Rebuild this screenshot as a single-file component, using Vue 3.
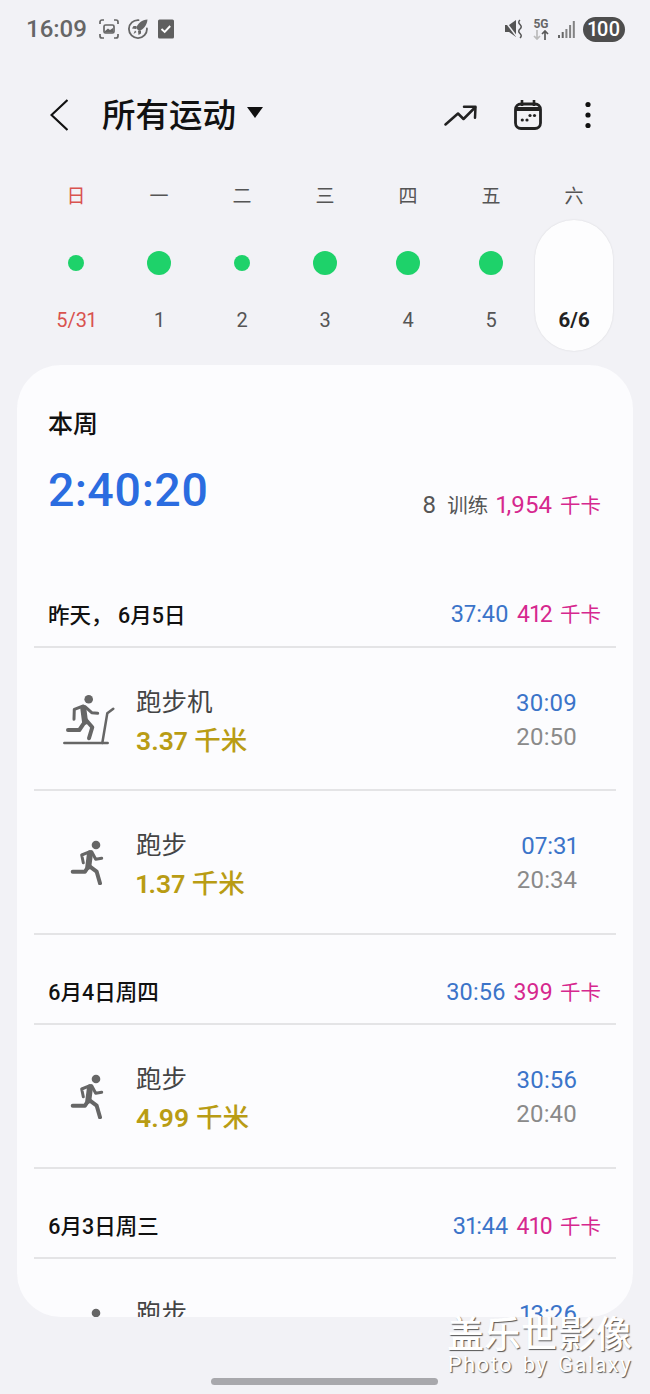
<template>
  <div class="page">
    <div class="status">
      <div class="status-left">
        <span class="time">16:09</span>
        <svg class="st" width="20" height="20" viewBox="0 0 20 20" fill="none" stroke="#666" stroke-width="1.7">
          <path d="M1 5V3a2 2 0 0 1 2-2h2M15 1h2a2 2 0 0 1 2 2v2M19 15v2a2 2 0 0 1-2 2h-2M5 19H3a2 2 0 0 1-2-2v-2" />
          <rect x="5" y="6" width="10" height="8" rx="1.5" />
          <path d="M6 12l3-2.5 2 1.500 3-2V13.500H6z" fill="#666" stroke="none" />
        </svg>
        <svg class="st" width="20" height="20" viewBox="0 0 20 20" fill="none">
          <path d="M10.500 1.100A9 9 0 1 0 18.900 9.500" stroke="#666" stroke-width="1.800" stroke-linecap="round" />
          <path d="M19.500 .5C14 1 10 4 8 9l3 3c5-2 8-6 8.500-11.500z" fill="#666" />
          <path d="M8.500 7H5.500l-1.500 2.500 4 .5zM13 11.500V14.500l-2.500 1.500-.5-4zM7 11.500l1.500 1.500-3 2z" fill="#666" />
        </svg>
        <svg class="st check" width="16" height="20" viewBox="0 0 16 20">
          <rect width="16" height="19" y="0.500" rx="1.500" fill="#5f5f5f" />
          <path d="M3.500 10l3.200 3 5.500-6" fill="none" stroke="#fff" stroke-width="1.900" />
        </svg>
      </div>
      <div class="status-right">
        <svg class="mute" width="18" height="20" viewBox="0 0 18 20">
          <path d="M0 6h4l7-5v17l-7-5H0z" fill="#555" />
          <path d="M0 2l12 16" stroke="#f2f2f6" stroke-width="1.500" />
          <path d="M15 1q-2.500 2.200 0 4.500t0 4.500 0 4.500 0 4.500" fill="none" stroke="#555" stroke-width="1.500" />
        </svg>
        <div class="net">
          <span>5G</span>
          <svg width="16" height="10" viewBox="0 0 16 10" fill="none" stroke-width="1.700">
            <path d="M4 0v9M1 6l3 3 3-3" stroke="#bbb" />
            <path d="M12 10V1M9 4l3-3 3 3" stroke="#5a5a5a" />
          </svg>
        </div>
        <svg class="signal" width="17" height="17" viewBox="0 0 17 17" fill="#666">
          <rect x="0" y="14" width="2" height="3" />
          <rect x="3.700" y="11" width="2" height="6" />
          <rect x="7.400" y="8" width="2" height="9" opacity="0.8" />
          <rect x="11.100" y="4" width="2" height="13" opacity="0.8" />
          <rect x="14.800" y="0" width="2" height="17" opacity="0.8" />
        </svg>
        <span class="battery">100</span>
      </div>
    </div>

    <header class="toolbar">
      <svg class="back" width="18" height="32" viewBox="0 0 18 32" fill="none" stroke="#111" stroke-width="2.200">
        <path d="M17.500 1L1.500 16l16 15" />
      </svg>
      <h1 class="title">所有运动</h1>
      <span class="caret"></span>
      <div class="actions">
        <svg width="33" height="21" viewBox="0 0 33 21" fill="none" stroke="#222" stroke-width="2.500" stroke-linecap="round" stroke-linejoin="round">
          <path d="M1.500 19.500l12.500-11 5.500 5.500L31 2.500" />
          <path d="M20 1.800h11.500l-.5 11" />
        </svg>
        <svg width="28" height="30" viewBox="0 0 28 30" fill="none">
          <rect x="1.500" y="4" width="25" height="24.500" rx="5.500" stroke="#222" stroke-width="2.800" />
          <path d="M2 9h24" stroke="#222" stroke-width="4" />
          <path d="M8 0v6M20 0v6" stroke="#222" stroke-width="2.600" />
          <g fill="#222">
            <circle cx="8.300" cy="20" r="1.600" /><circle cx="13" cy="20" r="1.600" />
            <circle cx="16" cy="15.500" r="1.600" /><circle cx="20.500" cy="15.500" r="1.600" />
          </g>
        </svg>
        <svg class="more" width="10" height="30" viewBox="0 0 10 30" fill="#111">
          <circle cx="5" cy="4.500" r="2.600" /><circle cx="5" cy="15" r="2.600" /><circle cx="5" cy="25.500" r="2.600" />
        </svg>
      </div>
    </header>

    <div class="week">
      <div v-for="d in days" :key="d.name" class="day" :class="{ today: d.today, sun: d.sun }">
        <span class="day-name">{{ d.name }}</span>
        <div class="day-body">
          <span class="dot-wrap">
            <i v-if="d.dot" class="dot" :style="{ width: d.dot + 'px', height: d.dot + 'px' }"></i>
          </span>
          <span class="day-num">{{ d.num }}</span>
        </div>
      </div>
    </div>

    <main class="card">
      <section class="summary">
        <div class="sum-label">本周</div>
        <div class="sum-row">
          <span class="sum-time">2:40:20</span>
          <span class="sum-meta"><span class="count">8</span> <span class="u">训练</span> <em>1,954 <span class="u">千卡</span></em></span>
        </div>
      </section>

      <section v-for="g in groups" :key="g.date" class="group">
        <div class="group-head">
          <span class="group-date">{{ g.date }}</span>
          <span class="group-meta"><b>{{ g.time }}</b> <em>{{ g.kcal }} <span class="u">千卡</span></em></span>
        </div>
        <div v-for="r in g.rows" :key="r.time" class="row">
          <div class="row-icon">
            <svg v-if="r.kind === 'tread'" class="ic-tread" width="60" height="60" viewBox="0 0 60 60" fill="none" stroke="#666" stroke-linecap="round" stroke-linejoin="round">
              <circle cx="28.700" cy="9.300" r="4.300" fill="#666" stroke="none" />
              <path d="M23.300 18.300L25 31.700" stroke-width="6" />
              <path d="M25 16.700l6.700 6 6 .6M23.300 16l-9 3.300-.3 10" stroke-width="3" />
              <path d="M25 31.700L19.300 40H8M26 30l6.300 7.300-3.300 11" stroke-width="4" />
              <path d="M4.300 53h43.400" stroke-width="2.500" />
              <path d="M42.300 53l5-29.700 6-4.600" stroke-width="2.500" />
            </svg>
            <svg v-else class="ic-run" width="40" height="50" viewBox="0 0 40 50" fill="none" stroke="#666" stroke-linecap="round" stroke-linejoin="round">
              <circle cx="26" cy="10" r="4.300" fill="#666" stroke="none" />
              <path d="M20 18.300l-1.700 13.400" stroke-width="6" />
              <path d="M21.700 16.700l4 7.600 6-1M20 16.700L11.700 20l1.600 7.700" stroke-width="3" />
              <path d="M18.300 31.700L15 36.700H2.700M20 31.700l6.700 5 3.300 11.600" stroke-width="4" />
            </svg>
          </div>
          <div class="row-main">
            <div class="row-name">{{ r.name }}</div>
            <div v-if="r.dist" class="row-dist">{{ r.dist }} <span class="dist-unit">千米</span></div>
          </div>
          <div class="row-side">
            <div class="row-time">{{ r.time }}</div>
            <div v-if="r.pace" class="row-pace">{{ r.pace }}</div>
          </div>
        </div>
      </section>
    </main>

    <div class="watermark">
      <div class="wm-cn">盖乐世影像</div>
      <div class="wm-en">Photo by Galaxy</div>
    </div>
    <div class="home-bar"></div>
  </div>
</template>

<script setup>
const days = [
  { name: '日', num: '5/31', dot: 16, sun: true },
  { name: '一', num: '1', dot: 24 },
  { name: '二', num: '2', dot: 16 },
  { name: '三', num: '3', dot: 24 },
  { name: '四', num: '4', dot: 24 },
  { name: '五', num: '5', dot: 24 },
  { name: '六', num: '6/6', today: true },
]

const groups = [
  {
    date: '昨天， 6月5日', time: '37:40', kcal: '412',
    rows: [
      { kind: 'tread', name: '跑步机', dist: '3.37', time: '30:09', pace: '20:50' },
      { kind: 'run', name: '跑步', dist: '1.37', time: '07:31', pace: '20:34' },
    ],
  },
  {
    date: '6月4日周四', time: '30:56', kcal: '399',
    rows: [{ kind: 'run', name: '跑步', dist: '4.99', time: '30:56', pace: '20:40' }],
  },
  {
    date: '6月3日周三', time: '31:44', kcal: '410',
    rows: [{ kind: 'run', name: '跑步', time: '13:26' }],
  },
]
</script>

<style>
body {
  background: #f2f2f6;
}
</style>

<style scoped>
.page {
  position: relative;
  width: 650px;
  height: 1394px;
  overflow: hidden;
  background: #f2f2f6;
  font-family: "Roboto", "Noto Sans CJK SC", sans-serif;
  font-variant-numeric: proportional-nums;
  color: #111;
}

.status {
  display: flex;
  justify-content: space-between;
  align-items: center;
  height: 58px;
  padding: 0 25px 0 26px;
}
.status-left,
.status-right {
  display: flex;
  align-items: center;
}
.time {
  font-size: 24px;
  font-weight: 500;
  font-variant-numeric: normal;
  color: #666;
  margin-right: 12px;
}
.st {
  margin-right: 9px;
}
.check {
  margin-left: 1px;
  margin-right: 0;
}
.mute {
  margin-right: 10px;
}
.net {
  display: flex;
  flex-direction: column;
  align-items: center;
  width: 16px;
  margin-right: 9px;
  font-size: 12px;
  font-weight: 700;
  line-height: 12px;
  color: #666;
}
.signal {
  margin-right: 8px;
}
.battery {
  width: 42px;
  height: 25px;
  border-radius: 13px;
  background: #4e4e4e;
  color: #fff;
  font-size: 20px;
  font-weight: 500;
  line-height: 25px;
  text-align: center;
}

.toolbar {
  display: flex;
  align-items: center;
  height: 58px;
  margin-top: 28px;
  padding: 0 57px 0 50px;
}
.back {
  margin-right: 34px;
}
.title {
  margin: 0;
  padding-top: 2px;
  font-size: 33.500px;
  font-weight: 500;
  line-height: 56px;
  color: #111;
}
.caret {
  width: 0;
  height: 0;
  margin: -6px 0 0 11px;
  border-left: 8px solid transparent;
  border-right: 8px solid transparent;
  border-top: 11px solid #111;
}
.actions {
  display: flex;
  align-items: center;
  gap: 37px;
  margin-left: auto;
}
.more {
  margin-left: 4px;
}

.week {
  display: grid;
  grid-template-columns: repeat(7, 83px);
  margin-top: 42px;
  padding-left: 34.500px;
}
.day {
  display: flex;
  flex-direction: column;
  align-items: center;
  color: #555;
}
.day-name {
  height: 22px;
  font-size: 19px;
  line-height: 22px;
}
.day-body {
  display: flex;
  flex-direction: column;
  align-items: center;
  box-sizing: border-box;
  width: 78px;
  height: 131px;
  margin-top: 12px;
  padding-top: 31px;
  border-radius: 39px;
}
.dot-wrap {
  display: flex;
  align-items: center;
  justify-content: center;
  height: 24px;
}
.dot {
  display: block;
  border-radius: 50%;
  background: #1ed26a;
}
.day-num {
  margin-top: 33px;
  font-size: 20px;
  line-height: 24px;
}
.sun {
  color: #d9534f;
}
.today .day-body {
  background: #fdfdfe;
  box-shadow: 0 0 2px rgba(0, 0, 0, 0.12);
}
.today .day-num {
  font-size: 20.500px;
  font-weight: 700;
  color: #222;
}

.card {
  box-sizing: border-box;
  height: 952px;
  margin: 14px 17px 0;
  padding: 0 17px;
  overflow: hidden;
  border-radius: 44px;
  background: #fcfcfe;
}
.summary {
  box-sizing: border-box;
  height: 192px;
  padding: 43px 15px 0 14px;
}
.sum-label {
  font-size: 25px;
  font-weight: 500;
  line-height: 34px;
}
.sum-row {
  display: flex;
  justify-content: space-between;
  align-items: flex-end;
  margin-top: 20px;
}
.sum-time {
  font-size: 46.500px;
  font-weight: 500;
  line-height: 56px;
  letter-spacing: 0.3px;
  color: #2b6ce0;
}
.sum-meta {
  margin-bottom: -3px;
  font-size: 24px;
  line-height: 30px;
  word-spacing: 2px;
  color: #555;
}
.count {
  margin-right: 3px;
}
.u {
  font-size: 20.500px;
}
em {
  font-style: normal;
  color: #d6288e;
}

.group-head {
  display: flex;
  justify-content: space-between;
  align-items: center;
  box-sizing: border-box;
  height: 90.500px;
  padding: 24px 15px 0 14px;
  border-bottom: 2px solid #e4e4e6;
}
.group-date {
  font-size: 21.500px;
  font-weight: 500;
}
.group-meta {
  font-size: 23px;
  word-spacing: 1.500px;
}
.group-meta b {
  margin-right: 1px;
  font-size: 23.500px;
  font-weight: 400;
  color: #3b74c9;
}
.row {
  display: flex;
  box-sizing: border-box;
  height: 143.500px;
  padding-top: 37px;
  border-bottom: 2px solid #e4e4e6;
}
.row-icon {
  width: 102px;
}
.ic-tread {
  display: block;
  margin: 5px 0 0 26px;
}
.ic-run {
  display: block;
  margin: 7px 0 0 36px;
}
.row-main {
  flex: 1;
}
.row-name {
  font-size: 25.500px;
  line-height: 34px;
  color: #444;
}
.row-dist {
  font-size: 26.500px;
  font-weight: 600;
  line-height: 44px;
  color: #b99c14;
}
.dist-unit {
  font-weight: 500;
}
.row-side {
  padding: 1px 39px 0 0;
  text-align: right;
  font-size: 24px;
  line-height: 34px;
}
.row-time {
  color: #3b74c9;
}
.row-pace {
  color: #8a8a8a;
}

.watermark {
  position: absolute;
  right: 18px;
  top: 1318px;
  color: #fff;
  text-shadow: 1px 1px 1px #555;
  text-align: right;
}
.wm-cn {
  font-size: 37px;
  font-weight: 500;
  line-height: 36px;
}
.wm-en {
  font-size: 22px;
  line-height: 22px;
  letter-spacing: 1.400px;
  word-spacing: 3px;
}
.home-bar {
  position: absolute;
  left: 211px;
  top: 1378px;
  width: 227px;
  height: 7px;
  border-radius: 4px;
  background: #a8a8ac;
}
</style>
